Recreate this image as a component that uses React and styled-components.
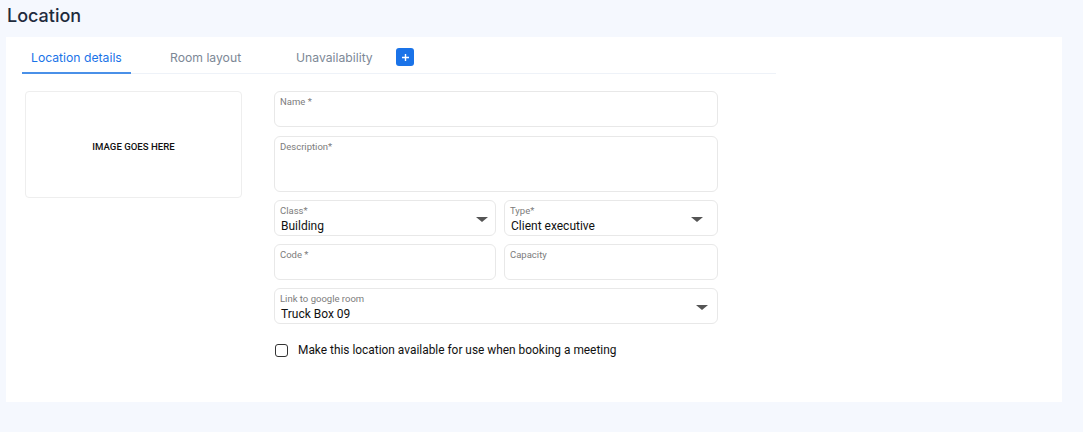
import React from 'react';
import styled, { createGlobalStyle } from 'styled-components';

const GlobalStyle = createGlobalStyle`
  html, body {
    margin: 0;
    padding: 0;
    background: #f5f8fe;
    font-family: Inter, Roboto, "Liberation Sans", sans-serif;
  }
`;

const Page = styled.div`
  width: 1083px;
  height: 432px;
  background: #f5f8fe;
  padding: 4px 21px 0 6px;
  box-sizing: border-box;
`;

const Title = styled.h1`
  margin: 0 0 0 1px;
  height: 33px;
  font-size: 18px;
  font-weight: 500;
  line-height: 24px;
  color: #1f2b3d;
`;

const Panel = styled.div`
  background: #fff;
  height: 365px;
  padding: 0 16px;
  box-sizing: border-box;
`;

const TabBar = styled.div`
  display: flex;
  align-items: center;
  width: 754px;
  height: 37px;
  border-bottom: 1px solid #eef2f8;
  box-sizing: border-box;
`;

const Tab = styled.div`
  height: 100%;
  width: ${({ $w }) => $w}px;
  margin-right: ${({ $gap }) => $gap || 0}px;
  display: flex;
  align-items: center;
  padding: 5px 9px 0;
  box-sizing: border-box;
  font-size: 12.2px;
  white-space: nowrap;
  color: ${({ $active }) => ($active ? '#1a73e8' : '#7d8896')};
  border-bottom: 2px solid ${({ $active }) => ($active ? '#4a90e8' : 'transparent')};
  margin-bottom: -1px;
`;

const AddButton = styled.button`
  width: 18px;
  height: 18px;
  border: none;
  border-radius: 3px;
  background: #1a73e8;
  color: #fff;
  display: flex;
  align-items: center;
  justify-content: center;
  padding: 0;
  margin-top: 4px;
`;

const Body = styled.div`
  display: flex;
  gap: 32px;
  padding: 17px 0 0 3px;
`;

const ImageBox = styled.div`
  width: 217px;
  height: 107px;
  border: 1px solid #eeeeee;
  border-radius: 4px;
  box-sizing: border-box;
  display: flex;
  align-items: center;
  justify-content: center;
  padding-top: 3px;
  font-family: Roboto, "Liberation Sans", sans-serif;
  font-size: 9.6px;
  font-weight: 500;
  color: #111;
`;

const Form = styled.div`
  width: 444px;
  display: flex;
  flex-direction: column;
  gap: 8px;
  font-family: Roboto, "Liberation Sans", sans-serif;
`;

const Row = styled.div`
  display: grid;
  grid-template-columns: 222px 1fr;
  gap: 8px;
`;

const Field = styled.div`
  position: relative;
  height: ${({ $tall }) => ($tall ? '56px' : '36px')};
  margin-top: ${({ $tall }) => ($tall ? '1px' : '0')};
  border: 1px solid #e8e8e8;
  border-radius: 6px;
  box-sizing: border-box;
  padding: 4px 30px 0 5px;
`;

const Label = styled.div`
  font-size: 9.5px;
  color: #7c7c7c;
  line-height: 12px;
`;

const Value = styled.div`
  font-size: 12px;
  color: #111;
  line-height: 15px;
  margin-top: 2px;
  padding-left: 1px;
`;

const Arrow = styled.span`
  position: absolute;
  right: ${({ $right }) => $right}px;
  top: 16px;
  width: 0;
  height: 0;
  border-left: 6px solid transparent;
  border-right: 6px solid transparent;
  border-top: 5px solid #555;
`;

const CheckRow = styled.label`
  display: flex;
  align-items: center;
  gap: 10px;
  margin-top: 11px;
  padding-left: 1px;
  font-size: 11.9px;
  color: #111;
`;

const Box = styled.span`
  width: 13px;
  height: 13px;
  border: 1px solid #333;
  border-radius: 3px;
  box-sizing: border-box;
`;

const TextField = ({ label, value, arrow, tall }) => (
  <Field $tall={tall}>
    <Label>{label}</Label>
    {value && <Value>{value}</Value>}
    {arrow && <Arrow $right={arrow} />}
  </Field>
);

export default function App() {
  return (
    <Page>
      <GlobalStyle />
      <Title>Location</Title>
      <Panel>
        <TabBar>
          <Tab $active $w={109} $gap={30}>Location details</Tab>
          <Tab $w={126}>Room layout</Tab>
          <Tab $w={109}>Unavailability</Tab>
          <AddButton>
            <svg width="9" height="9" viewBox="0 0 9 9">
              <path d="M4.5 1v7M1 4.5h7" stroke="#fff" strokeWidth="1.4" />
            </svg>
          </AddButton>
        </TabBar>
        <Body>
          <ImageBox>IMAGE GOES HERE</ImageBox>
          <Form>
            <TextField label="Name *" />
            <TextField label="Description*" tall />
            <Row>
              <TextField label="Class*" value="Building" arrow={7} />
              <TextField label="Type*" value="Client executive" arrow={14} />
            </Row>
            <Row>
              <TextField label="Code *" />
              <TextField label="Capacity" />
            </Row>
            <TextField label="Link to google room" value="Truck Box 09" arrow={9} />
            <CheckRow>
              <Box />
              Make this location available for use when booking a meeting
            </CheckRow>
          </Form>
        </Body>
      </Panel>
    </Page>
  );
}
